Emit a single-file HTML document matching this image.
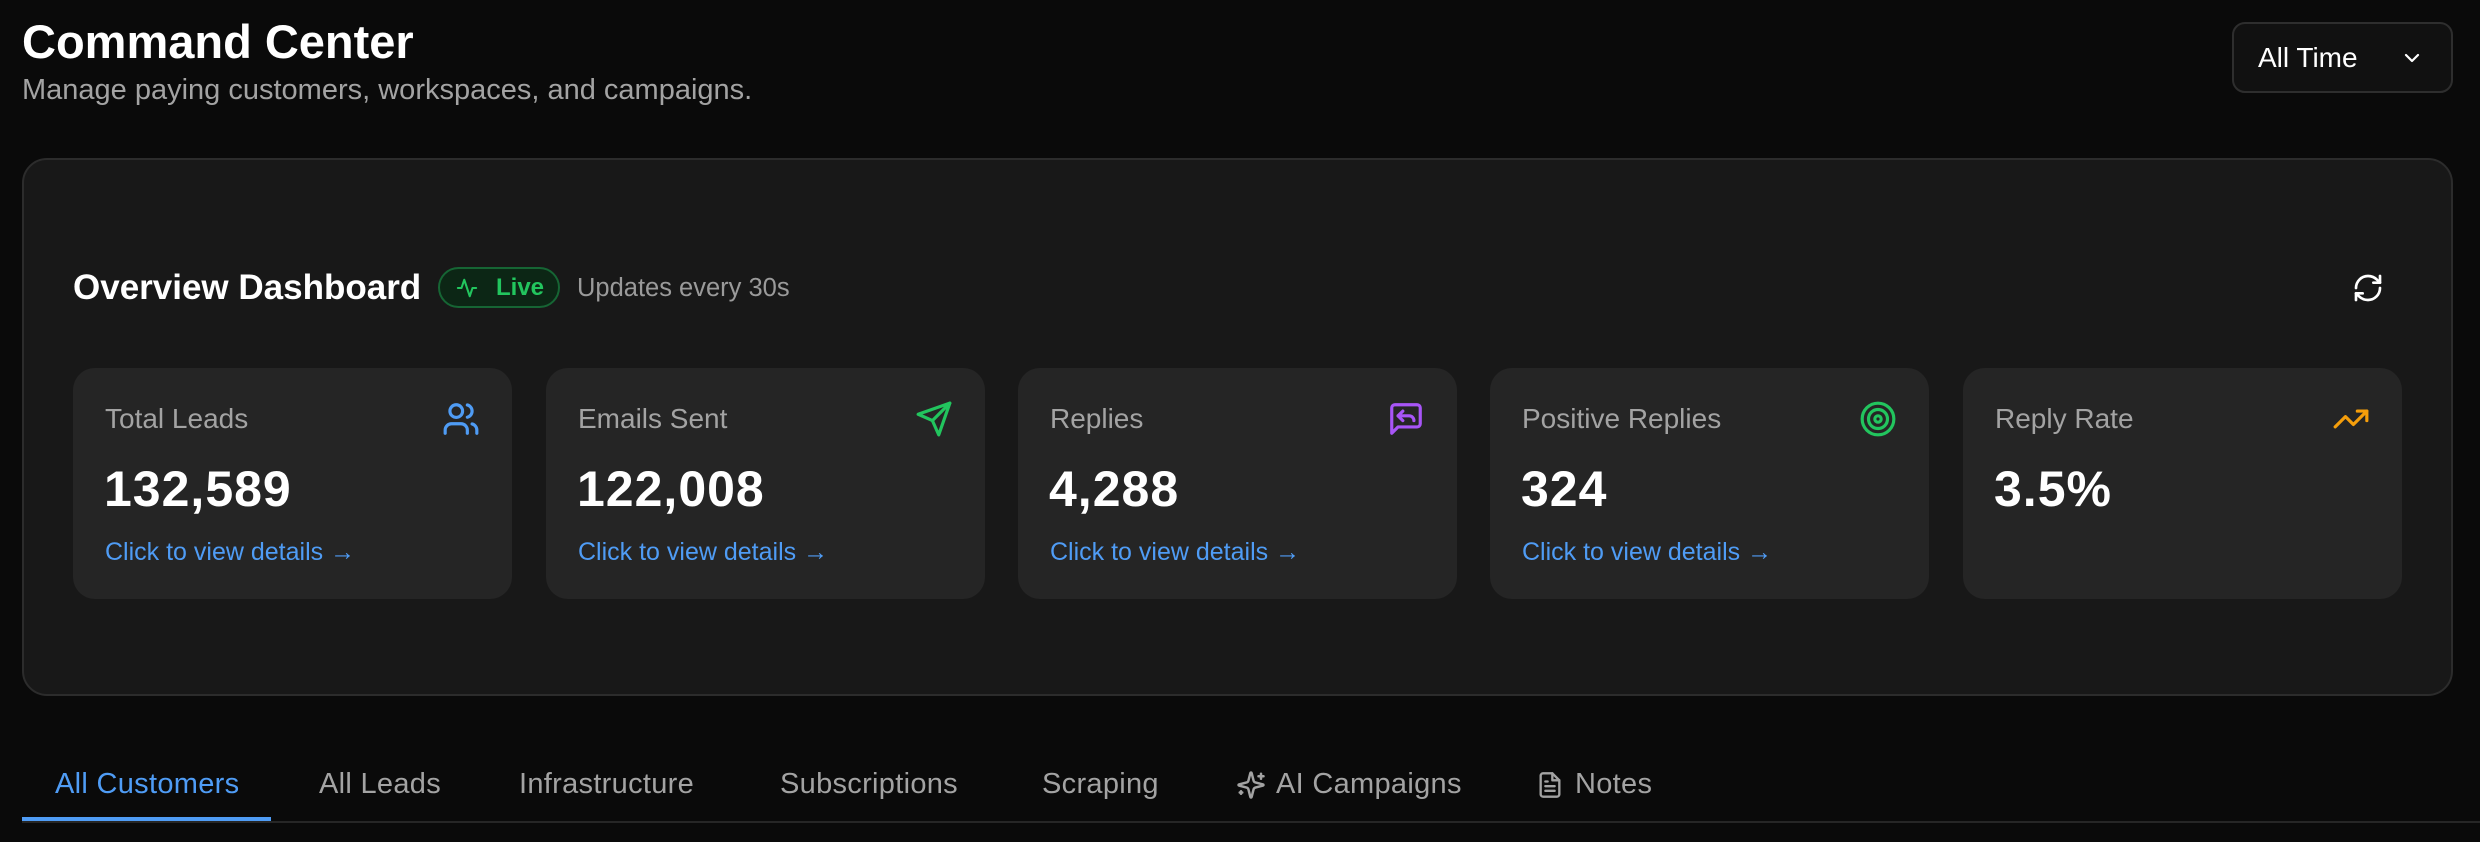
<!DOCTYPE html>
<html><head><meta charset="utf-8"><style>
*{margin:0;padding:0;box-sizing:border-box}
body{width:2480px;height:842px;background:#0a0a0a;font-family:"Liberation Sans",sans-serif;position:relative;overflow:hidden;color:#fff}
.a{position:absolute;white-space:nowrap}
.card{position:absolute;top:368px;width:439px;height:231px;background:#252525;border-radius:22px}
.lbl{position:absolute;left:32px;top:35px;font-size:28px;color:#a3a3a3}
.val{position:absolute;left:31px;top:92px;font-size:50px;font-weight:bold;color:#fff;letter-spacing:1px}
.lnk{position:absolute;left:32px;top:170px;font-size:25px;color:#4f9cf5}
.ic{position:absolute;right:32px;top:32px;width:38px;height:38px}
.tab{position:absolute;top:768px;font-size:29px;color:#a3a3a3;letter-spacing:0.3px}
</style></head><body>
<div class="a" style="left:22px;top:14px;font-size:47px;font-weight:bold">Command Center</div>
<div class="a" style="left:22px;top:74px;font-size:29px;color:#a3a3a3">Manage paying customers, workspaces, and campaigns.</div>
<div class="a" style="left:2232px;top:22px;width:221px;height:71px;border:2px solid #2e2e2e;border-radius:13px;background:#111"></div>
<div class="a" style="left:2258px;top:42px;font-size:28px">All Time</div>
<svg class="a" style="left:2400px;top:46px" width="24" height="24" viewBox="0 0 24 24" fill="none" stroke="#fff" stroke-width="2.2" stroke-linecap="round" stroke-linejoin="round"><path d="M6 9l6 6 6-6"/></svg>

<div class="a" style="left:22px;top:158px;width:2431px;height:538px;background:#181818;border:2px solid #2c2c2c;border-radius:25px"></div>
<div class="a" style="left:73px;top:268px;font-size:35px;font-weight:bold">Overview Dashboard</div>
<div class="a" style="left:438px;top:267px;width:122px;height:41px;border:2px solid #166534;background:#0c2615;border-radius:21px"></div>
<svg class="a" style="left:456px;top:277px" width="22" height="22" viewBox="0 0 24 24" fill="none" stroke="#22c55e" stroke-width="2.2" stroke-linecap="round" stroke-linejoin="round"><path d="M22 12h-4l-3 9L9 3l-3 9H2"/></svg>
<div class="a" style="left:496px;top:274px;font-size:24px;color:#22c55e;font-weight:bold">Live</div>
<div class="a" style="left:577px;top:274px;font-size:25.5px;color:#9a9a9a">Updates every 30s</div>
<svg class="a" style="left:2352px;top:272px" width="32" height="32" viewBox="0 0 24 24" fill="none" stroke="#fff" stroke-width="2" stroke-linecap="round" stroke-linejoin="round"><path d="M3 12a9 9 0 0 1 9-9 9.75 9.75 0 0 1 6.74 2.74L21 8"/><path d="M21 3v5h-5"/><path d="M21 12a9 9 0 0 1-9 9 9.75 9.75 0 0 1-6.74-2.74L3 16"/><path d="M8 16H3v5"/></svg>

<div class="card" style="left:73px"><div class="lbl">Total Leads</div><div class="val">132,589</div><div class="lnk">Click to view details →</div>
<svg class="ic" viewBox="0 0 24 24" fill="none" stroke="#4f9cf5" stroke-width="2" stroke-linecap="round" stroke-linejoin="round"><path d="M16 21v-2a4 4 0 0 0-4-4H6a4 4 0 0 0-4 4v2"/><circle cx="9" cy="7" r="4"/><path d="M22 21v-2a4 4 0 0 0-3-3.87"/><path d="M16 3.13a4 4 0 0 1 0 7.75"/></svg></div>
<div class="card" style="left:546px"><div class="lbl">Emails Sent</div><div class="val">122,008</div><div class="lnk">Click to view details →</div>
<svg class="ic" viewBox="0 0 24 24" fill="none" stroke="#22c55e" stroke-width="2" stroke-linecap="round" stroke-linejoin="round"><path d="M22 2L11 13"/><path d="M22 2l-7 20-4-9-9-4 20-7z"/></svg></div>
<div class="card" style="left:1018px"><div class="lbl">Replies</div><div class="val">4,288</div><div class="lnk">Click to view details →</div>
<svg class="ic" viewBox="0 0 24 24" fill="none" stroke="#a855f7" stroke-width="2" stroke-linecap="round" stroke-linejoin="round"><path d="M21 15a2 2 0 0 1-2 2H7l-4 4V5a2 2 0 0 1 2-2h14a2 2 0 0 1 2 2z"/><path d="M10 7l-3 3 3 3"/><path d="M7 10h7a3 3 0 0 1 3 3"/></svg></div>
<div class="card" style="left:1490px"><div class="lbl">Positive Replies</div><div class="val">324</div><div class="lnk">Click to view details →</div>
<svg class="ic" viewBox="0 0 24 24" fill="none" stroke="#22c55e" stroke-width="2" stroke-linecap="round" stroke-linejoin="round"><circle cx="12" cy="12" r="10"/><circle cx="12" cy="12" r="6"/><circle cx="12" cy="12" r="2"/></svg></div>
<div class="card" style="left:1963px"><div class="lbl">Reply Rate</div><div class="val">3.5%</div>
<svg class="ic" viewBox="0 0 24 24" fill="none" stroke="#f59e0b" stroke-width="2" stroke-linecap="round" stroke-linejoin="round"><path d="M22 7l-8.5 8.5-5-5L2 17"/><path d="M16 7h6v6"/></svg></div>

<div class="tab" style="left:55px;color:#4f9cf5">All Customers</div>
<div class="tab" style="left:319px">All Leads</div>
<div class="tab" style="left:519px">Infrastructure</div>
<div class="tab" style="left:780px">Subscriptions</div>
<div class="tab" style="left:1042px">Scraping</div>
<svg class="a" style="left:1236px;top:770px" width="30" height="30" viewBox="0 0 24 24" fill="none" stroke="#a3a3a3" stroke-width="2" stroke-linecap="round" stroke-linejoin="round"><path d="M9.94 15.5A2 2 0 0 0 8.5 14.06l-6.14-1.58a.5.5 0 0 1 0-.96L8.5 9.94A2 2 0 0 0 9.94 8.5l1.58-6.14a.5.5 0 0 1 .96 0L14.06 8.5A2 2 0 0 0 15.5 9.94l6.140 1.58a.5.5 0 0 1 0 .96L15.5 14.06a2 2 0 0 0-1.44 1.44l-1.58 6.14a.5.5 0 0 1-.96 0z"/><path d="M20 3v4M22 5h-4M4 17v2M5 18H3"/></svg>
<div class="tab" style="left:1276px">AI Campaigns</div>
<svg class="a" style="left:1536px;top:771px" width="28" height="28" viewBox="0 0 24 24" fill="none" stroke="#a3a3a3" stroke-width="2" stroke-linecap="round" stroke-linejoin="round"><path d="M14 2H6a2 2 0 0 0-2 2v16a2 2 0 0 0 2 2h12a2 2 0 0 0 2-2V8z"/><path d="M14 2v6h6M16 13H8M16 17H8M10 9H8"/></svg>
<div class="tab" style="left:1575px">Notes</div>
<div class="a" style="left:22px;top:821px;width:2458px;height:2px;background:#262626"></div>
<div class="a" style="left:22px;top:817px;width:249px;height:4px;background:#4f9cf5"></div>
</body></html>
